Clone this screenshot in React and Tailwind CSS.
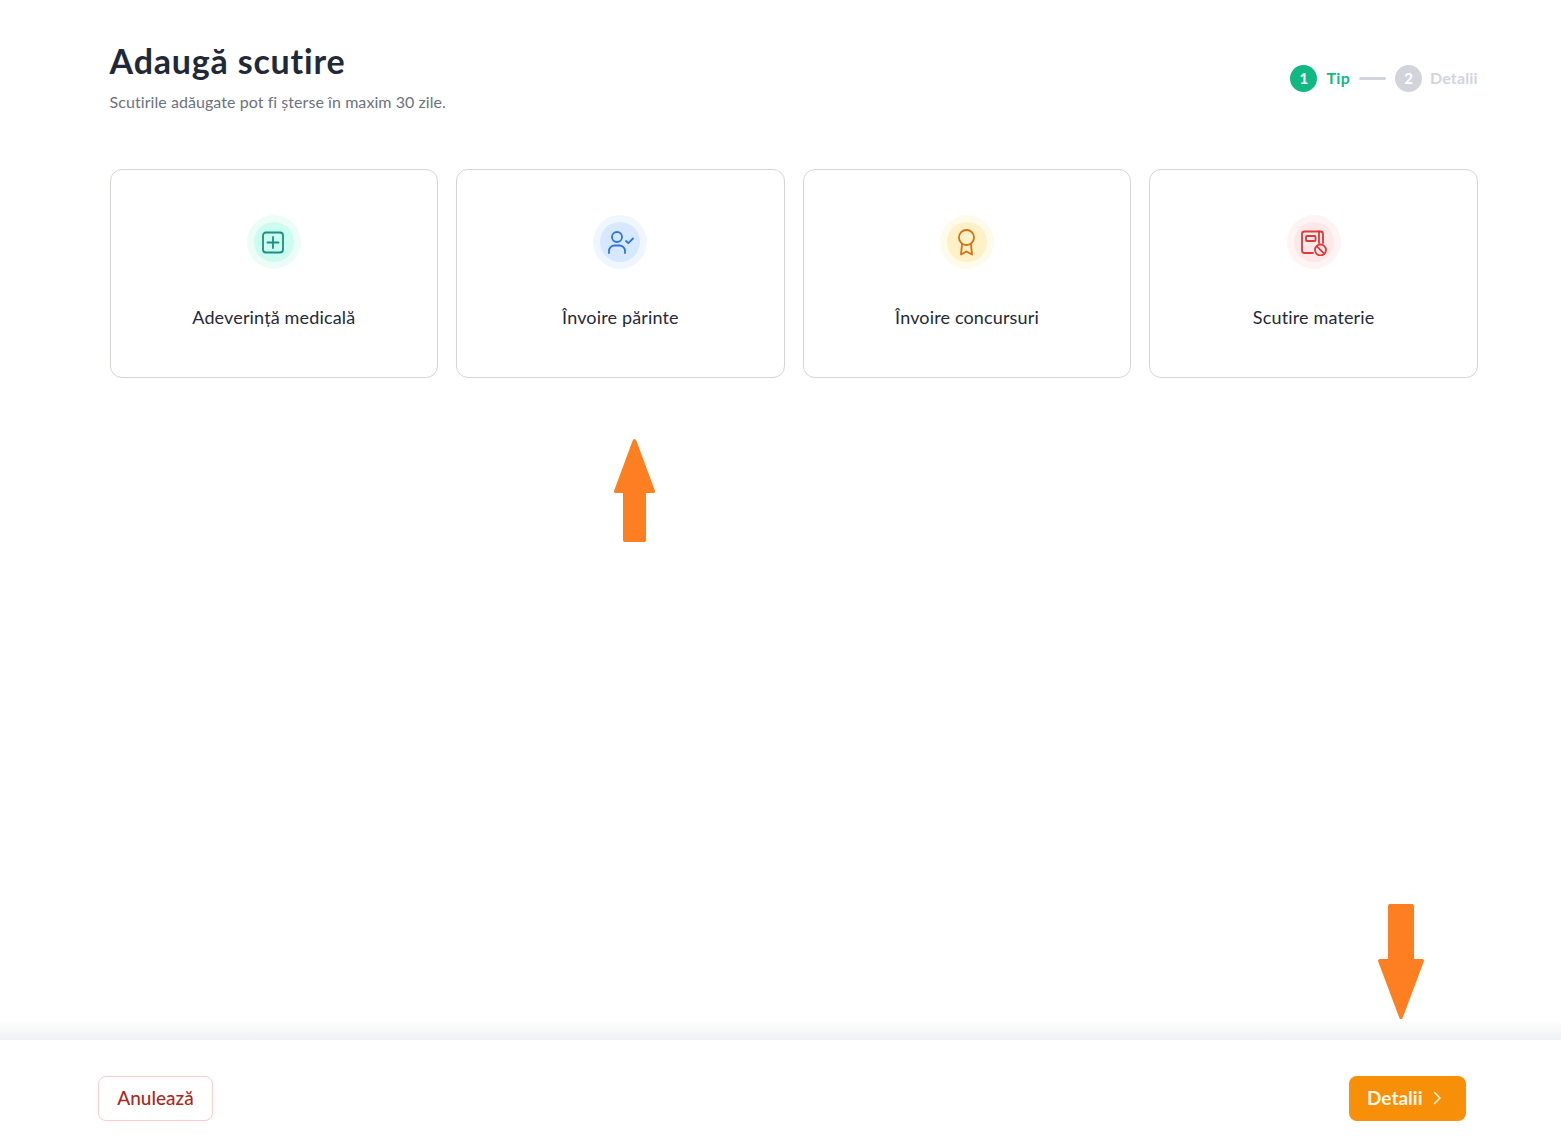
const font = { fontFamily: '"Lato", "Noto Sans", sans-serif' };

function PlusIcon() {
    return (
        <svg width="28" height="28" viewBox="0 0 28 28" fill="none" stroke="currentColor" strokeWidth="1.8" strokeLinecap="round" strokeLinejoin="round">
            <rect x="3" y="4.500" width="20" height="20" rx="3" />
            <path d="M13 9v11M7.500 14.500h11" />
        </svg>
    );
}

function ParentIcon() {
    return (
        <svg width="28" height="28" viewBox="0 0 28 28" fill="none" stroke="currentColor" strokeWidth="1.800" strokeLinecap="round" strokeLinejoin="round">
            <circle cx="11" cy="9" r="5" />
            <path d="M3 25v-2c0-3 2.500-5.500 5.500-5.500h5c3 0 5.500 2.500 5.500 5.500v2" />
            <path d="M20 13l2.300 2.200 4.700-4.700" />
        </svg>
    );
}

function AwardIcon() {
    return (
        <svg width="28" height="28" viewBox="0 0 28 28" fill="none" stroke="currentColor" strokeWidth="1.800" strokeLinecap="round" strokeLinejoin="round">
            <circle cx="13.500" cy="9.500" r="7.500" />
            <path d="M9 16.500L8 26.500l5.500-3 5.500 3-1-10" />
        </svg>
    );
}

function BookBanIcon() {
    return (
        <svg width="28" height="28" viewBox="0 0 28 28" fill="none" stroke="currentColor" strokeWidth="1.800" strokeLinecap="round" strokeLinejoin="round">
            <path d="M13 25H4.500A2.500 2.500 0 0 1 2 22.500V6a2.500 2.500 0 0 1 2.500-2.500H20.500A2.500 2.500 0 0 1 23 6v9" />
            <path d="M19 3.500V15" />
            <rect x="6" y="8" width="9.500" height="5" rx="1" />
            <circle cx="20.500" cy="22" r="5.500" />
            <path d="M16.700 18.200l7.600 7.600" />
        </svg>
    );
}

const cards = [
    { label: 'Adeverință medicală', icon: PlusIcon, outer: 'bg-[#ecfdf8]', inner: 'bg-[#ccfbef]', color: 'text-[#1b8f80]' },
    { label: 'Învoire părinte', icon: ParentIcon, outer: 'bg-[#eff6ff]', inner: 'bg-[#d6e8fe]', color: 'text-[#2f74dc]' },
    { label: 'Învoire concursuri', icon: AwardIcon, outer: 'bg-[#fffbeb]', inner: 'bg-[#fef0c7]', color: 'text-[#d4700f]' },
    { label: 'Scutire materie', icon: BookBanIcon, outer: 'bg-[#fef4f4]', inner: 'bg-[#fde8e8]', color: 'text-[#d93a3a]' },
];

export default function App() {
    return (
        <div className="relative h-[1138px] flex flex-col bg-white overflow-hidden" style={font}>
            <main className="flex-1 pl-[109.6px] pr-[83.2px] pt-[39px]">
                {/* Header */}
                <div className="flex justify-between items-start">
                    <div>
                        <h1 className="text-[34px] leading-[44px] font-bold tracking-[0.8px] text-[#1f2937]">Adaugă scutire</h1>
                        <p className="mt-[7px] text-[16px] leading-[24px] tracking-[0.06px] text-[#6b7280]">Scutirile adăugate pot fi șterse în maxim 30 zile.</p>
                    </div>
                    <div className="flex items-center mt-[26px]">
                        <span className="w-[27px] h-[27px] rounded-full bg-[#10b981] text-white text-[15px] font-bold flex items-center justify-center">1</span>
                        <span className="ml-[9px] pb-[2px] text-[16px] font-bold tracking-[0.3px] text-[#10b981]">Tip</span>
                        <span className="ml-[9px] w-[27px] h-[3px] rounded-full bg-[#d1d5db]" />
                        <span className="ml-[9px] w-[27px] h-[27px] rounded-full bg-[#d1d5db] text-white text-[15px] font-bold flex items-center justify-center">2</span>
                        <span className="ml-[8px] pb-[2px] text-[16px] font-bold tracking-[0.15px] text-[#d1d5db]">Detalii</span>
                    </div>
                </div>

                {/* Cards */}
                <div className="mt-[55px] grid grid-cols-4 gap-[18.3px]">
                    {cards.map(({ label, icon: Icon, outer, inner, color }) => (
                        <div key={label} className="h-[209px] border border-[#d1d5db] rounded-[12px] flex flex-col items-center pt-[45px]">
                            <div className={`w-[54px] h-[54px] rounded-full flex items-center justify-center ${outer}`}>
                                <div className={`w-[40px] h-[40px] rounded-full flex items-center justify-center ${inner} ${color}`}>
                                    <Icon />
                                </div>
                            </div>
                            <p className="mt-[36px] text-[18px] leading-[24px] tracking-[0.15px] text-[#1f2937]">{label}</p>
                        </div>
                    ))}
                </div>
            </main>

            {/* Footer */}
            <div className="h-[20px] bg-gradient-to-b from-white to-[#f0f1f2]" />
            <footer className="h-[98px] shrink-0 pl-[98px] pr-[95px] pt-[36px] flex justify-between items-start bg-white">
                <button className="w-[115px] h-[45px] pb-[1px] rounded-[8px] border border-[#fecaca] text-[19px] font-medium text-[#a82a1f]">Anulează</button>
                <button className="w-[117px] h-[45px] pl-[18px] pb-[1px] rounded-[8px] bg-[#f78f08] text-[19px] font-bold text-[#fff7e6] flex items-center gap-[7px]">
                    Detalii
                    <svg width="16" height="16" viewBox="0 0 16 16" fill="none" stroke="currentColor" strokeWidth="1.500" strokeLinecap="round" strokeLinejoin="round">
                        <path d="M5.500 2.500L11 8l-5.500 5.500" />
                    </svg>
                </button>
            </footer>

            {/* Annotation arrows */}
            <svg className="absolute left-[614px] top-[439px]" width="41" height="103" viewBox="0 0 41 103" fill="#fe7f22">
                <path d="M20.500 0 C21.500 0 22 1 22.500 2 L41 52 C41 53.500 40.500 54 39 54 H32 V101 C32 102.500 31 103 30 103 H11 C10 103 9 102.500 9 101 V54 H2 C.5 54 0 53.500 0 52 L18.500 2 C19 1 19.500 0 20.500 0Z" />
            </svg>
            <svg className="absolute left-[1378px] top-[904px]" width="46" height="115" viewBox="0 0 46 115" fill="#fe7f22">
                <path d="M12 0 H34 C35.500 0 36 1 36 2 V55 H44 C45.500 55 46 56 46 57 L25 113 C24.500 114.500 24 115 23 115 C22 115 21.500 114.500 21 113 L0 57 C0 56 .5 55 2 55 H10 V2 C10 1 10.500 0 12 0Z" />
            </svg>
        </div>
    );
}
